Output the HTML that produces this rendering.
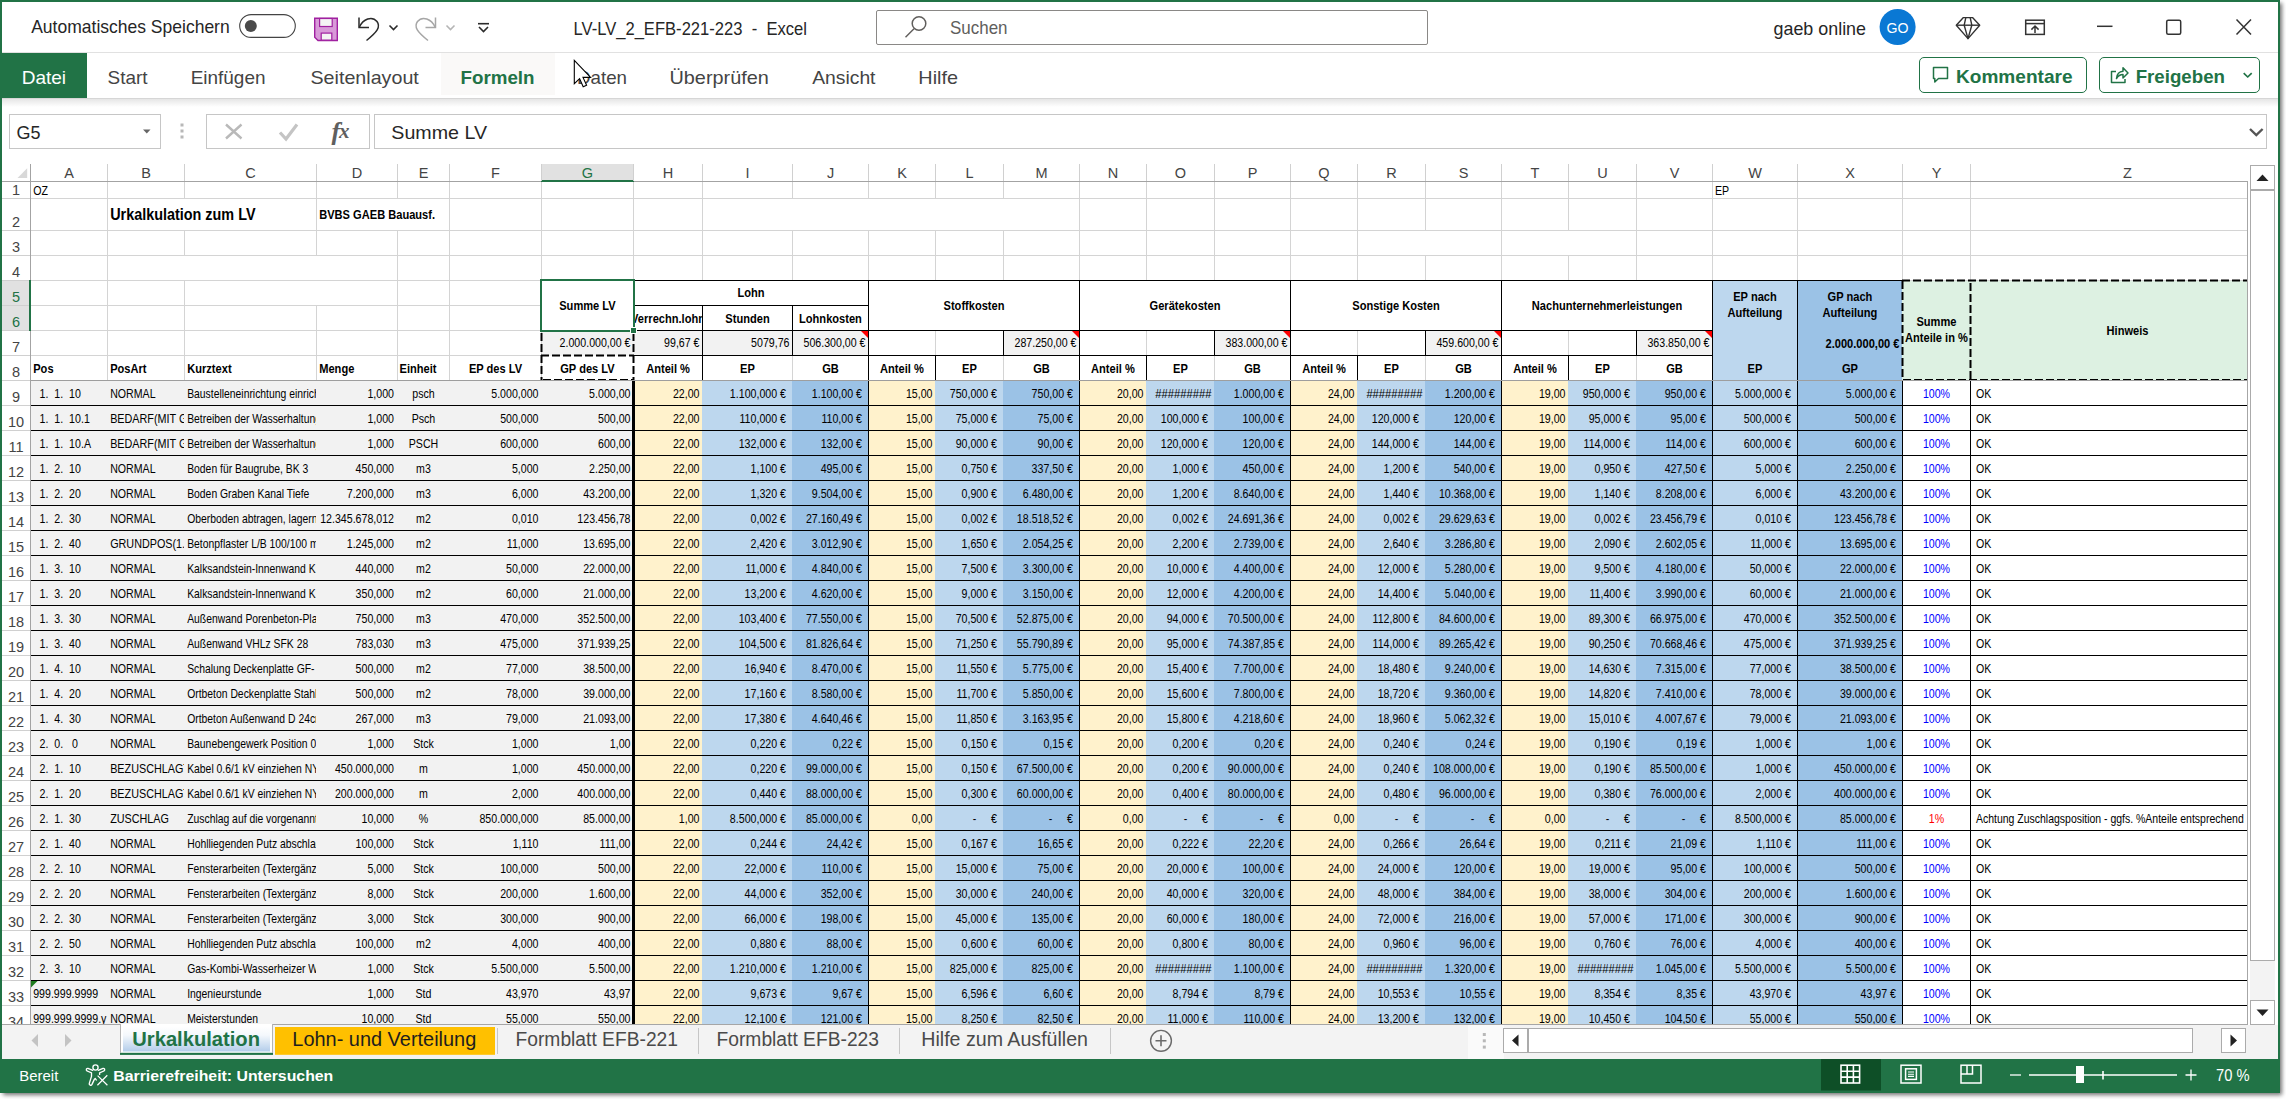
<!DOCTYPE html>
<html lang="de"><head><meta charset="utf-8"><title>LV-LV_2_EFB-221-223 - Excel</title>
<style>
html,body{margin:0;padding:0;background:#fff}
body{width:2286px;height:1099px;overflow:hidden}
svg{display:block}
text{font-family:"Liberation Sans",sans-serif;white-space:pre}
.c,.ct,.cz,.cb,.hs{font-size:12px;fill:#000}
.b{font-size:12px;font-weight:bold;fill:#000}
.bb{font-size:16px;font-weight:bold;fill:#000}
.ch{font-size:14.5px;fill:#444}
.rh{font-size:14.5px;fill:#444}
.ui{font-size:18.4px;fill:#262626}
.tab{font-size:18.4px;fill:#444}
.st{font-size:19.5px;fill:#4a4a4a}
.sb{font-size:15.5px;fill:#fff}
.e{text-anchor:end} .m{text-anchor:middle}
</style></head><body>
<svg width="2286" height="1099" viewBox="0 0 2286 1099">
<defs>
<linearGradient id="sh" x1="0" y1="0" x2="0" y2="1"><stop offset="0" stop-color="#e6e6e6"/><stop offset="1" stop-color="#ffffff"/></linearGradient>
<linearGradient id="tabg" x1="0" y1="0" x2="0" y2="1"><stop offset="0" stop-color="#ffffff"/><stop offset="0.35" stop-color="#f4f8fc"/><stop offset="1" stop-color="#b3cdea"/></linearGradient>
<filter id="ws" x="-1%" y="-1%" width="102%" height="103%"><feGaussianBlur stdDeviation="2.2"/></filter>
<clipPath id="cA"><rect x="31" y="181" width="76" height="843"/></clipPath>
<clipPath id="cB"><rect x="108" y="181" width="76" height="843"/></clipPath>
<clipPath id="cC"><rect x="185" y="355" width="131" height="669"/></clipPath>
<clipPath id="cH"><rect x="635" y="305" width="67" height="25"/></clipPath>
<clipPath id="cG"><rect x="0" y="160" width="2248" height="864"/></clipPath>
</defs>

<rect x="3" y="3" width="2279" height="1092" fill="#000" opacity=".55" filter="url(#ws)"/>
<rect x="0" y="0" width="2280" height="1093" fill="#fff"/>
<rect x="0" y="0" width="2280" height="2" fill="#217346"/>
<rect x="2" y="52" width="2276" height="1" fill="#e1e1e1"/>
<rect x="2" y="53" width="2276" height="45" fill="#fff"/>
<rect x="0" y="53" width="87" height="45" fill="#217346"/>
<rect x="441" y="53" width="114" height="42" fill="#faf9f8"/>
<rect x="2" y="98" width="2276" height="1" fill="#d6d6d6"/>
<rect x="2" y="99" width="2276" height="8" fill="url(#sh)"/>
<text class="ui" x="31.2" y="33.1" textLength="198.5" lengthAdjust="spacingAndGlyphs">Automatisches Speichern</text>
<rect x="239.7" y="14.6" width="55.6" height="22.8" rx="11.4" fill="#fff" stroke="#444" stroke-width="1.1"/>
<circle cx="250.8" cy="26" r="6" fill="#4a4a4a"/>
<g transform="translate(314,17.5)"><path d="M.7.7H23.3V23H4L.7 19.8Z" fill="#d89ad8" stroke="#a020a0" stroke-width="1.4"/><rect x="5.6" y="1" width="12.6" height="8" fill="#f4f4f4" stroke="#a020a0" stroke-width="1.2"/><rect x="7.2" y="15.6" width="10.6" height="7" fill="#f4f4f4" stroke="#a020a0" stroke-width="1.2"/></g>
<g fill="none" stroke="#2b2b2b" stroke-width="1.5" stroke-linecap="butt"><path d="M359 17.5V27.5H369"/><path d="M359.5 27C363 19 372 15.5 377 21.5C381 27 377 32 366.5 40.5"/><path d="M389.5 25.5L393.5 29.5L397.5 25.5" stroke-width="1.6"/></g>
<g fill="none" stroke="#a6a6a6" stroke-width="1.5"><path d="M435.5 17.5V27.5H425.5"/><path d="M435 27C431.5 19 422.5 15.5 417.5 21.5C413.5 27 417.5 32 428 40.5"/><path d="M446.5 25.5L450.5 29.5L454.5 25.5" stroke="#b5b5b5" stroke-width="1.6"/></g>
<g fill="none" stroke="#2b2b2b" stroke-width="1.6"><path d="M478 23.7H489"/><path d="M479 27L483.5 31.5L488 27"/></g>
<text class="ui" x="573.5" y="34.5" textLength="233.5" lengthAdjust="spacingAndGlyphs" xml:space="preserve">LV-LV_2_EFB-221-223  -  Excel</text>
<rect x="876.5" y="10.5" width="551" height="34" rx="1.5" fill="#fff" stroke="#8a8886" stroke-width="1"/>
<g fill="none" stroke="#605e5c" stroke-width="1.5"><circle cx="919" cy="23.5" r="6.8"/><path d="M914 28.8L905.5 37.3"/></g>
<text class="ui" x="950" y="34" textLength="57.5" lengthAdjust="spacingAndGlyphs" style="fill:#605e5c">Suchen</text>
<text class="ui" x="1773.5" y="34.5" textLength="92.5" lengthAdjust="spacingAndGlyphs">gaeb online</text>
<circle cx="1897.6" cy="27" r="18" fill="#0a78d4"/>
<text x="1897.6" y="32.6" text-anchor="middle" font-size="15.5" fill="#fff" textLength="22" lengthAdjust="spacingAndGlyphs">GO</text>
<g fill="none" stroke="#333" stroke-width="1.4" stroke-linejoin="round"><path d="M1963.4 17.6H1972.5L1979.7 25.2L1968 38.6L1956.3 25.2Z"/><path d="M1956.3 25.2H1979.7"/><path d="M1965.8 17.6L1964.2 25.2L1968 38.6L1971.8 25.2L1970.2 17.6"/></g>
<g fill="none" stroke="#333" stroke-width="1.5"><rect x="2025.7" y="20.2" width="18.6" height="14.2"/><path d="M2025 23.6H2045"/><path d="M2035 33V26.2M2031.4 29.6L2035 26L2038.6 29.6"/></g>
<g fill="none" stroke="#333" stroke-width="1.5"><path d="M2097 26.3H2112.5"/><rect x="2166.7" y="20.2" width="14" height="14" rx="1.5"/><path d="M2236.5 19.5L2251 34.5M2251 19.5L2236.5 34.5"/></g>
<text class="tab" x="21.7" y="83.6" textLength="44.4" lengthAdjust="spacingAndGlyphs" style="fill:#fff">Datei</text>
<text class="tab" x="107.5" y="83.6" textLength="40.0" lengthAdjust="spacingAndGlyphs">Start</text>
<text class="tab" x="190.7" y="83.6" textLength="74.8" lengthAdjust="spacingAndGlyphs">Einfügen</text>
<text class="tab" x="310.5" y="83.6" textLength="108.3" lengthAdjust="spacingAndGlyphs">Seitenlayout</text>
<text class="tab" x="460.5" y="83.6" textLength="74.0" lengthAdjust="spacingAndGlyphs" style="fill:#217346;font-weight:bold">Formeln</text>
<text class="tab" x="577" y="83.6" textLength="50.0" lengthAdjust="spacingAndGlyphs">Daten</text>
<text class="tab" x="669.5" y="83.6" textLength="99.3" lengthAdjust="spacingAndGlyphs">Überprüfen</text>
<text class="tab" x="812.2" y="83.6" textLength="63.3" lengthAdjust="spacingAndGlyphs">Ansicht</text>
<text class="tab" x="918.3" y="83.6" textLength="39.7" lengthAdjust="spacingAndGlyphs">Hilfe</text>
<rect x="1919.5" y="57.5" width="167" height="35" rx="4.5" fill="#fff" stroke="#217346" stroke-width="1"/>
<rect x="2099.5" y="57.5" width="160" height="35" rx="4.5" fill="#fff" stroke="#217346" stroke-width="1"/>
<path d="M1933.5 67.5H1947.5V78.5H1938.5L1934.8 82V78.5H1933.5Z" fill="none" stroke="#217346" stroke-width="1.5" stroke-linejoin="round"/>
<text class="tab" x="1956" y="83.3" textLength="116.5" lengthAdjust="spacingAndGlyphs" style="fill:#217346;font-weight:bold">Kommentare</text>
<g fill="none" stroke="#217346" stroke-width="1.5" stroke-linejoin="round"><path d="M2116 71.5H2111.5V82.5H2125V79"/><path d="M2116.5 78.5C2117 73.5 2119.5 71.5 2123 71.3V67.7L2128 73L2123 78V74.6C2120.5 74.6 2118.3 75.6 2116.5 78.5Z"/><path d="M2243.7 73.2L2247.7 77L2251.7 73.2" stroke-width="1.7"/></g>
<text class="tab" x="2135.7" y="83.3" textLength="89.3" lengthAdjust="spacingAndGlyphs" style="fill:#217346;font-weight:bold">Freigeben</text>
<path d="M574.3 60.3V83.7L579.6 78.7L583.2 86.7L586.6 85.2L583 77.4H590.6Z" fill="#fff" stroke="#000" stroke-width="1.1" stroke-linejoin="miter"/>
<rect x="9.5" y="114.5" width="151" height="34" fill="#fff" stroke="#c6c6c6"/>
<text class="ui" x="16.5" y="138.8" textLength="24.0" lengthAdjust="spacingAndGlyphs">G5</text>
<path d="M143 129.5H150.5L146.75 133.6Z" fill="#666"/>
<g fill="#b8b8b8"><rect x="180.5" y="123.5" width="3" height="3"/><rect x="180.5" y="129.5" width="3" height="3"/><rect x="180.5" y="135.5" width="3" height="3"/></g>
<rect x="206.5" y="114.5" width="163" height="34" fill="#fff" stroke="#c6c6c6"/>
<g fill="none" stroke="#b9b9b9" stroke-width="2.4"><path d="M226 124.5L241.5 138.5M241.5 124.5L226 138.5"/></g>
<path d="M280 132.5L286 139L297 124.5" fill="none" stroke="#c4c4c4" stroke-width="3.2"/>
<text x="331.5" y="139.6" font-style="italic" font-weight="bold" fill="#5f5f5f" style="font-family:'Liberation Serif',serif"><tspan font-size="26">f</tspan><tspan font-size="21" dx="-1.2" dy="-1.6">x</tspan></text>
<rect x="374.5" y="114.5" width="1892" height="34" fill="#fff" stroke="#c6c6c6"/>
<text class="ui" x="391.3" y="138.8" textLength="95.7" lengthAdjust="spacingAndGlyphs">Summe LV</text>
<path d="M2250 129L2256.3 135L2262.6 129" fill="none" stroke="#555" stroke-width="2.4"/>
<g clip-path="url(#cG)">
<rect x="30" y="381" width="603" height="643" fill="#f2f2f2"/>
<rect x="633" y="381" width="69" height="643" fill="#fff2cc"/>
<rect x="702" y="381" width="90" height="643" fill="#bdd7ee"/>
<rect x="792" y="381" width="76" height="643" fill="#9bc2e6"/>
<rect x="868" y="381" width="67" height="643" fill="#fff2cc"/>
<rect x="935" y="381" width="68" height="643" fill="#bdd7ee"/>
<rect x="1003" y="381" width="76" height="643" fill="#9bc2e6"/>
<rect x="1079" y="381" width="67" height="643" fill="#fff2cc"/>
<rect x="1146" y="381" width="68" height="643" fill="#bdd7ee"/>
<rect x="1214" y="381" width="76" height="643" fill="#9bc2e6"/>
<rect x="1290" y="381" width="67" height="643" fill="#fff2cc"/>
<rect x="1357" y="381" width="68" height="643" fill="#bdd7ee"/>
<rect x="1425" y="381" width="76" height="643" fill="#9bc2e6"/>
<rect x="1501" y="381" width="67" height="643" fill="#fff2cc"/>
<rect x="1568" y="381" width="68" height="643" fill="#bdd7ee"/>
<rect x="1636" y="381" width="76" height="643" fill="#9bc2e6"/>
<rect x="1712" y="281" width="85" height="743" fill="#bdd7ee"/>
<rect x="1797" y="281" width="105" height="743" fill="#9bc2e6"/>
<rect x="1902" y="281" width="345" height="100" fill="#ddf1e2"/>
<rect x="541" y="331" width="92" height="25" fill="#f2f2f2"/>
<rect x="633" y="331" width="69" height="25" fill="#f2f2f2"/>
<rect x="702" y="331" width="90" height="25" fill="#f2f2f2"/>
<rect x="792" y="331" width="76" height="25" fill="#f2f2f2"/>
<rect x="1003" y="331" width="76" height="25" fill="#f2f2f2"/>
<rect x="1214" y="331" width="76" height="25" fill="#f2f2f2"/>
<rect x="1425" y="331" width="76" height="25" fill="#f2f2f2"/>
<rect x="1636" y="331" width="76" height="25" fill="#f2f2f2"/>
<rect x="31" y="198" width="2216" height="1" fill="#d4d4d4"/>
<rect x="31" y="230" width="2216" height="1" fill="#d4d4d4"/>
<rect x="31" y="255" width="2216" height="1" fill="#d4d4d4"/>
<rect x="31" y="280" width="2216" height="1" fill="#d4d4d4"/>
<rect x="31" y="305" width="510" height="1" fill="#d4d4d4"/>
<rect x="31" y="330" width="510" height="1" fill="#d4d4d4"/>
<rect x="31" y="355" width="510" height="1" fill="#d4d4d4"/>
<rect x="31" y="380" width="510" height="1" fill="#d4d4d4"/>
<rect x="634" y="280" width="1613" height="1" fill="#d4d4d4"/>
<rect x="107" y="182" width="1" height="16" fill="#d4d4d4"/>
<rect x="184" y="182" width="1" height="16" fill="#d4d4d4"/>
<rect x="316" y="182" width="1" height="16" fill="#d4d4d4"/>
<rect x="397" y="182" width="1" height="16" fill="#d4d4d4"/>
<rect x="449" y="182" width="1" height="16" fill="#d4d4d4"/>
<rect x="541" y="182" width="1" height="16" fill="#d4d4d4"/>
<rect x="107" y="199" width="1" height="31" fill="#d4d4d4"/>
<rect x="316" y="199" width="1" height="31" fill="#d4d4d4"/>
<rect x="449" y="199" width="1" height="31" fill="#d4d4d4"/>
<rect x="541" y="199" width="1" height="31" fill="#d4d4d4"/>
<rect x="107" y="231" width="1" height="24" fill="#d4d4d4"/>
<rect x="184" y="231" width="1" height="24" fill="#d4d4d4"/>
<rect x="316" y="231" width="1" height="24" fill="#d4d4d4"/>
<rect x="397" y="231" width="1" height="24" fill="#d4d4d4"/>
<rect x="449" y="231" width="1" height="24" fill="#d4d4d4"/>
<rect x="541" y="231" width="1" height="24" fill="#d4d4d4"/>
<rect x="107" y="256" width="1" height="24" fill="#d4d4d4"/>
<rect x="397" y="256" width="1" height="24" fill="#d4d4d4"/>
<rect x="449" y="256" width="1" height="24" fill="#d4d4d4"/>
<rect x="541" y="256" width="1" height="24" fill="#d4d4d4"/>
<rect x="107" y="281" width="1" height="24" fill="#d4d4d4"/>
<rect x="184" y="281" width="1" height="24" fill="#d4d4d4"/>
<rect x="397" y="281" width="1" height="24" fill="#d4d4d4"/>
<rect x="449" y="281" width="1" height="24" fill="#d4d4d4"/>
<rect x="541" y="281" width="1" height="24" fill="#d4d4d4"/>
<rect x="107" y="306" width="1" height="24" fill="#d4d4d4"/>
<rect x="184" y="306" width="1" height="24" fill="#d4d4d4"/>
<rect x="316" y="306" width="1" height="24" fill="#d4d4d4"/>
<rect x="397" y="306" width="1" height="24" fill="#d4d4d4"/>
<rect x="449" y="306" width="1" height="24" fill="#d4d4d4"/>
<rect x="541" y="306" width="1" height="24" fill="#d4d4d4"/>
<rect x="107" y="331" width="1" height="24" fill="#d4d4d4"/>
<rect x="184" y="331" width="1" height="24" fill="#d4d4d4"/>
<rect x="316" y="331" width="1" height="24" fill="#d4d4d4"/>
<rect x="397" y="331" width="1" height="24" fill="#d4d4d4"/>
<rect x="449" y="331" width="1" height="24" fill="#d4d4d4"/>
<rect x="541" y="331" width="1" height="24" fill="#d4d4d4"/>
<rect x="107" y="356" width="1" height="24" fill="#d4d4d4"/>
<rect x="184" y="356" width="1" height="24" fill="#d4d4d4"/>
<rect x="316" y="356" width="1" height="24" fill="#d4d4d4"/>
<rect x="397" y="356" width="1" height="24" fill="#d4d4d4"/>
<rect x="449" y="356" width="1" height="24" fill="#d4d4d4"/>
<rect x="541" y="356" width="1" height="24" fill="#d4d4d4"/>
<rect x="633" y="182" width="1" height="16" fill="#d4d4d4"/>
<rect x="702" y="182" width="1" height="16" fill="#d4d4d4"/>
<rect x="792" y="182" width="1" height="16" fill="#d4d4d4"/>
<rect x="868" y="182" width="1" height="16" fill="#d4d4d4"/>
<rect x="935" y="182" width="1" height="16" fill="#d4d4d4"/>
<rect x="1003" y="182" width="1" height="16" fill="#d4d4d4"/>
<rect x="1079" y="182" width="1" height="16" fill="#d4d4d4"/>
<rect x="1146" y="182" width="1" height="16" fill="#d4d4d4"/>
<rect x="1214" y="182" width="1" height="16" fill="#d4d4d4"/>
<rect x="1290" y="182" width="1" height="16" fill="#d4d4d4"/>
<rect x="1357" y="182" width="1" height="16" fill="#d4d4d4"/>
<rect x="1425" y="182" width="1" height="16" fill="#d4d4d4"/>
<rect x="1501" y="182" width="1" height="16" fill="#d4d4d4"/>
<rect x="1568" y="182" width="1" height="16" fill="#d4d4d4"/>
<rect x="1636" y="182" width="1" height="16" fill="#d4d4d4"/>
<rect x="1712" y="182" width="1" height="16" fill="#d4d4d4"/>
<rect x="1797" y="182" width="1" height="16" fill="#d4d4d4"/>
<rect x="1902" y="182" width="1" height="16" fill="#d4d4d4"/>
<rect x="1970" y="182" width="1" height="16" fill="#d4d4d4"/>
<rect x="633" y="199" width="1" height="31" fill="#d4d4d4"/>
<rect x="702" y="199" width="1" height="31" fill="#d4d4d4"/>
<rect x="1079" y="199" width="1" height="31" fill="#d4d4d4"/>
<rect x="1146" y="199" width="1" height="31" fill="#d4d4d4"/>
<rect x="1214" y="199" width="1" height="31" fill="#d4d4d4"/>
<rect x="1290" y="199" width="1" height="31" fill="#d4d4d4"/>
<rect x="1357" y="199" width="1" height="31" fill="#d4d4d4"/>
<rect x="1425" y="199" width="1" height="31" fill="#d4d4d4"/>
<rect x="1501" y="199" width="1" height="31" fill="#d4d4d4"/>
<rect x="1568" y="199" width="1" height="31" fill="#d4d4d4"/>
<rect x="1636" y="199" width="1" height="31" fill="#d4d4d4"/>
<rect x="1712" y="199" width="1" height="31" fill="#d4d4d4"/>
<rect x="1797" y="199" width="1" height="31" fill="#d4d4d4"/>
<rect x="1902" y="199" width="1" height="31" fill="#d4d4d4"/>
<rect x="1970" y="199" width="1" height="31" fill="#d4d4d4"/>
<rect x="633" y="231" width="1" height="24" fill="#d4d4d4"/>
<rect x="702" y="231" width="1" height="24" fill="#d4d4d4"/>
<rect x="792" y="231" width="1" height="24" fill="#d4d4d4"/>
<rect x="868" y="231" width="1" height="24" fill="#d4d4d4"/>
<rect x="935" y="231" width="1" height="24" fill="#d4d4d4"/>
<rect x="1003" y="231" width="1" height="24" fill="#d4d4d4"/>
<rect x="1079" y="231" width="1" height="24" fill="#d4d4d4"/>
<rect x="1146" y="231" width="1" height="24" fill="#d4d4d4"/>
<rect x="1214" y="231" width="1" height="24" fill="#d4d4d4"/>
<rect x="1290" y="231" width="1" height="24" fill="#d4d4d4"/>
<rect x="1357" y="231" width="1" height="24" fill="#d4d4d4"/>
<rect x="1501" y="231" width="1" height="24" fill="#d4d4d4"/>
<rect x="1636" y="231" width="1" height="24" fill="#d4d4d4"/>
<rect x="1712" y="231" width="1" height="24" fill="#d4d4d4"/>
<rect x="1797" y="231" width="1" height="24" fill="#d4d4d4"/>
<rect x="1902" y="231" width="1" height="24" fill="#d4d4d4"/>
<rect x="1970" y="231" width="1" height="24" fill="#d4d4d4"/>
<rect x="633" y="256" width="1" height="24" fill="#d4d4d4"/>
<rect x="702" y="256" width="1" height="24" fill="#d4d4d4"/>
<rect x="792" y="256" width="1" height="24" fill="#d4d4d4"/>
<rect x="868" y="256" width="1" height="24" fill="#d4d4d4"/>
<rect x="935" y="256" width="1" height="24" fill="#d4d4d4"/>
<rect x="1003" y="256" width="1" height="24" fill="#d4d4d4"/>
<rect x="1079" y="256" width="1" height="24" fill="#d4d4d4"/>
<rect x="1146" y="256" width="1" height="24" fill="#d4d4d4"/>
<rect x="1214" y="256" width="1" height="24" fill="#d4d4d4"/>
<rect x="1290" y="256" width="1" height="24" fill="#d4d4d4"/>
<rect x="1357" y="256" width="1" height="24" fill="#d4d4d4"/>
<rect x="1425" y="256" width="1" height="24" fill="#d4d4d4"/>
<rect x="1501" y="256" width="1" height="24" fill="#d4d4d4"/>
<rect x="1568" y="256" width="1" height="24" fill="#d4d4d4"/>
<rect x="1636" y="256" width="1" height="24" fill="#d4d4d4"/>
<rect x="1712" y="256" width="1" height="24" fill="#d4d4d4"/>
<rect x="1797" y="256" width="1" height="24" fill="#d4d4d4"/>
<rect x="1902" y="256" width="1" height="24" fill="#d4d4d4"/>
<rect x="1970" y="256" width="1" height="24" fill="#d4d4d4"/>
<rect x="935" y="331" width="1" height="24" fill="#d4d4d4"/>
<rect x="1146" y="331" width="1" height="24" fill="#d4d4d4"/>
<rect x="1357" y="331" width="1" height="24" fill="#d4d4d4"/>
<rect x="1568" y="331" width="1" height="24" fill="#d4d4d4"/>
<rect x="792" y="356" width="1" height="24" fill="#d4d4d4"/>
<rect x="1003" y="356" width="1" height="24" fill="#d4d4d4"/>
<rect x="1214" y="356" width="1" height="24" fill="#d4d4d4"/>
<rect x="1425" y="356" width="1" height="24" fill="#d4d4d4"/>
<rect x="1636" y="356" width="1" height="24" fill="#d4d4d4"/>
<rect x="2" y="160" width="2246" height="21" fill="#fff"/>
<rect x="542" y="164" width="91" height="16" fill="#e1e1e1"/>
<rect x="541" y="180" width="93" height="2" fill="#217346"/>
<rect x="107" y="164" width="1" height="17" fill="#d0d0d0"/>
<rect x="184" y="164" width="1" height="17" fill="#d0d0d0"/>
<rect x="316" y="164" width="1" height="17" fill="#d0d0d0"/>
<rect x="397" y="164" width="1" height="17" fill="#d0d0d0"/>
<rect x="449" y="164" width="1" height="17" fill="#d0d0d0"/>
<rect x="541" y="164" width="1" height="17" fill="#d0d0d0"/>
<rect x="633" y="164" width="1" height="17" fill="#d0d0d0"/>
<rect x="702" y="164" width="1" height="17" fill="#d0d0d0"/>
<rect x="792" y="164" width="1" height="17" fill="#d0d0d0"/>
<rect x="868" y="164" width="1" height="17" fill="#d0d0d0"/>
<rect x="935" y="164" width="1" height="17" fill="#d0d0d0"/>
<rect x="1003" y="164" width="1" height="17" fill="#d0d0d0"/>
<rect x="1079" y="164" width="1" height="17" fill="#d0d0d0"/>
<rect x="1146" y="164" width="1" height="17" fill="#d0d0d0"/>
<rect x="1214" y="164" width="1" height="17" fill="#d0d0d0"/>
<rect x="1290" y="164" width="1" height="17" fill="#d0d0d0"/>
<rect x="1357" y="164" width="1" height="17" fill="#d0d0d0"/>
<rect x="1425" y="164" width="1" height="17" fill="#d0d0d0"/>
<rect x="1501" y="164" width="1" height="17" fill="#d0d0d0"/>
<rect x="1568" y="164" width="1" height="17" fill="#d0d0d0"/>
<rect x="1636" y="164" width="1" height="17" fill="#d0d0d0"/>
<rect x="1712" y="164" width="1" height="17" fill="#d0d0d0"/>
<rect x="1797" y="164" width="1" height="17" fill="#d0d0d0"/>
<rect x="1902" y="164" width="1" height="17" fill="#d0d0d0"/>
<rect x="1970" y="164" width="1" height="17" fill="#d0d0d0"/>
<rect x="2" y="181" width="539" height="1" fill="#a3a3a3"/>
<rect x="634" y="181" width="1614" height="1" fill="#a3a3a3"/>
<path d="M17.5 178H27.2V168.3Z" fill="#d8d8d8"/>
<rect x="2" y="182" width="28" height="842" fill="#fff"/>
<rect x="2" y="281" width="28" height="50" fill="#e1e1e1"/>
<rect x="2" y="198" width="28" height="1" fill="#d0d0d0"/>
<rect x="2" y="230" width="28" height="1" fill="#d0d0d0"/>
<rect x="2" y="255" width="28" height="1" fill="#d0d0d0"/>
<rect x="2" y="280" width="28" height="1" fill="#d0d0d0"/>
<rect x="2" y="305" width="28" height="1" fill="#d0d0d0"/>
<rect x="2" y="330" width="28" height="1" fill="#d0d0d0"/>
<rect x="2" y="355" width="28" height="1" fill="#d0d0d0"/>
<rect x="2" y="380" width="28" height="1" fill="#d0d0d0"/>
<rect x="2" y="405" width="28" height="1" fill="#d0d0d0"/>
<rect x="2" y="430" width="28" height="1" fill="#d0d0d0"/>
<rect x="2" y="455" width="28" height="1" fill="#d0d0d0"/>
<rect x="2" y="480" width="28" height="1" fill="#d0d0d0"/>
<rect x="2" y="505" width="28" height="1" fill="#d0d0d0"/>
<rect x="2" y="530" width="28" height="1" fill="#d0d0d0"/>
<rect x="2" y="555" width="28" height="1" fill="#d0d0d0"/>
<rect x="2" y="580" width="28" height="1" fill="#d0d0d0"/>
<rect x="2" y="605" width="28" height="1" fill="#d0d0d0"/>
<rect x="2" y="630" width="28" height="1" fill="#d0d0d0"/>
<rect x="2" y="655" width="28" height="1" fill="#d0d0d0"/>
<rect x="2" y="680" width="28" height="1" fill="#d0d0d0"/>
<rect x="2" y="705" width="28" height="1" fill="#d0d0d0"/>
<rect x="2" y="730" width="28" height="1" fill="#d0d0d0"/>
<rect x="2" y="755" width="28" height="1" fill="#d0d0d0"/>
<rect x="2" y="780" width="28" height="1" fill="#d0d0d0"/>
<rect x="2" y="805" width="28" height="1" fill="#d0d0d0"/>
<rect x="2" y="830" width="28" height="1" fill="#d0d0d0"/>
<rect x="2" y="855" width="28" height="1" fill="#d0d0d0"/>
<rect x="2" y="880" width="28" height="1" fill="#d0d0d0"/>
<rect x="2" y="905" width="28" height="1" fill="#d0d0d0"/>
<rect x="2" y="930" width="28" height="1" fill="#d0d0d0"/>
<rect x="2" y="955" width="28" height="1" fill="#d0d0d0"/>
<rect x="2" y="980" width="28" height="1" fill="#d0d0d0"/>
<rect x="2" y="1005" width="28" height="1" fill="#d0d0d0"/>
<rect x="30" y="164" width="1" height="860" fill="#a3a3a3"/>
<rect x="29" y="280" width="2" height="51" fill="#217346"/>
<rect x="634" y="280" width="1269" height="1" fill="#000"/>
<rect x="634" y="305" width="235" height="1" fill="#000"/>
<rect x="634" y="330" width="1079" height="1" fill="#000"/>
<rect x="634" y="355" width="1079" height="1" fill="#000"/>
<rect x="31" y="405" width="2217" height="1" fill="#000"/>
<rect x="31" y="430" width="2217" height="1" fill="#000"/>
<rect x="31" y="455" width="2217" height="1" fill="#000"/>
<rect x="31" y="480" width="2217" height="1" fill="#000"/>
<rect x="31" y="505" width="2217" height="1" fill="#000"/>
<rect x="31" y="530" width="2217" height="1" fill="#000"/>
<rect x="31" y="555" width="2217" height="1" fill="#000"/>
<rect x="31" y="580" width="2217" height="1" fill="#000"/>
<rect x="31" y="605" width="2217" height="1" fill="#000"/>
<rect x="31" y="630" width="2217" height="1" fill="#000"/>
<rect x="31" y="655" width="2217" height="1" fill="#000"/>
<rect x="31" y="680" width="2217" height="1" fill="#000"/>
<rect x="31" y="705" width="2217" height="1" fill="#000"/>
<rect x="31" y="730" width="2217" height="1" fill="#000"/>
<rect x="31" y="755" width="2217" height="1" fill="#000"/>
<rect x="31" y="780" width="2217" height="1" fill="#000"/>
<rect x="31" y="805" width="2217" height="1" fill="#000"/>
<rect x="31" y="830" width="2217" height="1" fill="#000"/>
<rect x="31" y="855" width="2217" height="1" fill="#000"/>
<rect x="31" y="880" width="2217" height="1" fill="#000"/>
<rect x="31" y="905" width="2217" height="1" fill="#000"/>
<rect x="31" y="930" width="2217" height="1" fill="#000"/>
<rect x="31" y="955" width="2217" height="1" fill="#000"/>
<rect x="31" y="980" width="2217" height="1" fill="#000"/>
<rect x="31" y="1005" width="2217" height="1" fill="#000"/>
<rect x="702" y="305" width="1" height="75" fill="#000"/>
<rect x="792" y="305" width="1" height="50" fill="#000"/>
<rect x="868" y="280" width="1" height="744" fill="#000"/>
<rect x="935" y="355" width="1" height="25" fill="#000"/>
<rect x="1003" y="330" width="1" height="25" fill="#000"/>
<rect x="1079" y="280" width="1" height="744" fill="#000"/>
<rect x="1146" y="355" width="1" height="25" fill="#000"/>
<rect x="1214" y="330" width="1" height="25" fill="#000"/>
<rect x="1290" y="280" width="1" height="744" fill="#000"/>
<rect x="1357" y="355" width="1" height="25" fill="#000"/>
<rect x="1425" y="330" width="1" height="25" fill="#000"/>
<rect x="1501" y="280" width="1" height="744" fill="#000"/>
<rect x="1568" y="355" width="1" height="25" fill="#000"/>
<rect x="1636" y="330" width="1" height="25" fill="#000"/>
<rect x="1712" y="280" width="1" height="744" fill="#000"/>
<rect x="1797" y="280" width="1" height="744" fill="#000"/>
<rect x="1902" y="380" width="1" height="644" fill="#000"/>
<rect x="1970" y="380" width="1" height="644" fill="#000"/>
<rect x="632" y="381" width="3" height="643" fill="#000"/>
<rect x="31" y="380" width="2217" height="1" fill="#9e9e9e"/>
<rect x="2247" y="181" width="1" height="843" fill="#a6a6a6"/>
<g fill="none" stroke="#000" stroke-width="2" stroke-dasharray="8 3"><path d="M1902 280.5H2247"/><path d="M1902.5 281V379"/><path d="M1970.5 283V379"/><path d="M541.5 333V380"/><path d="M633.5 333V380"/><path d="M541 355.5H634"/></g>
<path d="M1903 379.5H2247M543 379.5H634" fill="none" stroke="#000" stroke-width="1.2" stroke-dasharray="8 3"/>
<path d="M861 331H868V338Z" fill="#ff0000"/>
<path d="M1072 331H1079V338Z" fill="#ff0000"/>
<path d="M1283 331H1290V338Z" fill="#ff0000"/>
<path d="M1494 331H1501V338Z" fill="#ff0000"/>
<path d="M1705 331H1712V338Z" fill="#ff0000"/>
<path d="M31 981H37.5L31 987.5Z" fill="#1e7b1e"/>
<rect x="541" y="280" width="93" height="51" fill="none" stroke="#217346" stroke-width="2"/>
<rect x="630.5" y="327.5" width="6" height="6" fill="#217346" stroke="#fff" stroke-width="1"/>
</g>
<g class="ch m" xml:space="preserve">
<text x="69.0" y="178.0">A</text>
<text x="146.0" y="178.0">B</text>
<text x="250.5" y="178.0">C</text>
<text x="357.0" y="178.0">D</text>
<text x="423.5" y="178.0">E</text>
<text x="495.5" y="178.0">F</text>
<text x="587.5" y="178.0" fill="#217346" style="fill:#217346">G</text>
<text x="668.0" y="178.0">H</text>
<text x="747.5" y="178.0">I</text>
<text x="830.5" y="178.0">J</text>
<text x="902.0" y="178.0">K</text>
<text x="969.5" y="178.0">L</text>
<text x="1041.5" y="178.0">M</text>
<text x="1113.0" y="178.0">N</text>
<text x="1180.5" y="178.0">O</text>
<text x="1252.5" y="178.0">P</text>
<text x="1324.0" y="178.0">Q</text>
<text x="1391.5" y="178.0">R</text>
<text x="1463.5" y="178.0">S</text>
<text x="1535.0" y="178.0">T</text>
<text x="1602.5" y="178.0">U</text>
<text x="1674.5" y="178.0">V</text>
<text x="1755.0" y="178.0">W</text>
<text x="1850.0" y="178.0">X</text>
<text x="1936.5" y="178.0">Y</text>
<text x="2127.5" y="178.0">Z</text>
</g>
<g class="rh m" xml:space="preserve">
<text x="16.0" y="194.7">1</text>
<text x="16.0" y="226.7">2</text>
<text x="16.0" y="251.7">3</text>
<text x="16.0" y="276.7">4</text>
<text x="16.0" y="301.7" fill="#217346" style="fill:#217346">5</text>
<text x="16.0" y="326.7" fill="#217346" style="fill:#217346">6</text>
<text x="16.0" y="351.7">7</text>
<text x="16.0" y="376.7">8</text>
<text x="16.0" y="401.7">9</text>
<text x="16.0" y="426.7">10</text>
<text x="16.0" y="451.7">11</text>
<text x="16.0" y="476.7">12</text>
<text x="16.0" y="501.7">13</text>
<text x="16.0" y="526.7">14</text>
<text x="16.0" y="551.7">15</text>
<text x="16.0" y="576.7">16</text>
<text x="16.0" y="601.7">17</text>
<text x="16.0" y="626.7">18</text>
<text x="16.0" y="651.7">19</text>
<text x="16.0" y="676.7">20</text>
<text x="16.0" y="701.7">21</text>
<text x="16.0" y="726.7">22</text>
<text x="16.0" y="751.7">23</text>
<text x="16.0" y="776.7">24</text>
<text x="16.0" y="801.7">25</text>
<text x="16.0" y="826.7">26</text>
<text x="16.0" y="851.7">27</text>
<text x="16.0" y="876.7">28</text>
<text x="16.0" y="901.7">29</text>
<text x="16.0" y="926.7">30</text>
<text x="16.0" y="951.7">31</text>
<text x="16.0" y="976.7">32</text>
<text x="16.0" y="1001.7">33</text>
<text x="16.0" y="1026.7">34</text>
</g>
<g class="c" transform="scale(0.885 1)" xml:space="preserve">
<text x="37.5" y="194.8">OZ</text>
<text x="1937.9" y="194.8">EP</text>
<text x="2232.8" y="398.0">OK</text>
<text x="2232.8" y="423.0">OK</text>
<text x="2232.8" y="448.0">OK</text>
<text x="2232.8" y="473.0">OK</text>
<text x="2232.8" y="498.0">OK</text>
<text x="2232.8" y="523.0">OK</text>
<text x="2232.8" y="548.0">OK</text>
<text x="2232.8" y="573.0">OK</text>
<text x="2232.8" y="598.0">OK</text>
<text x="2232.8" y="623.0">OK</text>
<text x="2232.8" y="648.0">OK</text>
<text x="2232.8" y="673.0">OK</text>
<text x="2232.8" y="698.0">OK</text>
<text x="2232.8" y="723.0">OK</text>
<text x="2232.8" y="748.0">OK</text>
<text x="2232.8" y="773.0">OK</text>
<text x="2232.8" y="798.0">OK</text>
<text x="2232.8" y="848.0">OK</text>
<text x="2232.8" y="873.0">OK</text>
<text x="2232.8" y="898.0">OK</text>
<text x="2232.8" y="923.0">OK</text>
<text x="2232.8" y="948.0">OK</text>
<text x="2232.8" y="973.0">OK</text>
<text x="2232.8" y="998.0">OK</text>
<text x="2232.8" y="1023.0">OK</text>
</g>
<g class="bb" transform="scale(0.9 1)" xml:space="preserve">
<text x="122.4" y="219.7">Urkalkulation zum LV</text>
</g>
<g class="b" transform="scale(0.925 1)" xml:space="preserve">
<text x="345.1" y="219.3">BVBS GAEB Bauausf.</text>
<text x="35.9" y="373.0">Pos</text>
<text x="119.1" y="373.0">PosArt</text>
<text x="202.4" y="373.0">Kurztext</text>
<text x="345.1" y="373.0">Menge</text>
<text x="431.9" y="373.0">Einheit</text>
</g>
<g class="b m" transform="scale(0.925 1)" xml:space="preserve">
<text x="635.1" y="310.0">Summe LV</text>
<text x="811.9" y="297.0">Lohn</text>
<text x="808.1" y="322.7">Stunden</text>
<text x="897.8" y="322.7">Lohnkosten</text>
<text x="1053.0" y="310.0">Stoffkosten</text>
<text x="1281.1" y="310.0">Gerätekosten</text>
<text x="1509.2" y="310.0">Sonstige Kosten</text>
<text x="1737.3" y="310.0">Nachunternehmerleistungen</text>
<text x="1897.3" y="301.0">EP nach</text>
<text x="1897.3" y="317.0">Aufteilung</text>
<text x="1897.3" y="373.0">EP</text>
<text x="2000.0" y="301.0">GP nach</text>
<text x="2000.0" y="317.0">Aufteilung</text>
<text x="2000.0" y="373.0">GP</text>
<text x="2093.5" y="326.0">Summe</text>
<text x="2093.5" y="342.0">Anteile in %</text>
<text x="2300.0" y="335.0">Hinweis</text>
<text x="535.7" y="373.0">EP des LV</text>
<text x="635.1" y="373.0">GP des LV</text>
<text x="722.2" y="373.0">Anteil %</text>
<text x="808.1" y="373.0">EP</text>
<text x="897.8" y="373.0">GB</text>
<text x="975.1" y="373.0">Anteil %</text>
<text x="1048.1" y="373.0">EP</text>
<text x="1125.9" y="373.0">GB</text>
<text x="1203.2" y="373.0">Anteil %</text>
<text x="1276.2" y="373.0">EP</text>
<text x="1354.1" y="373.0">GB</text>
<text x="1431.4" y="373.0">Anteil %</text>
<text x="1504.3" y="373.0">EP</text>
<text x="1582.2" y="373.0">GB</text>
<text x="1659.5" y="373.0">Anteil %</text>
<text x="1732.4" y="373.0">EP</text>
<text x="1810.3" y="373.0">GB</text>
</g>
<g clip-path="url(#cH)">
<g class="b m" transform="scale(0.925 1)" xml:space="preserve">
<text x="722.2" y="322.7">Verrechn.lohn</text>
</g>
</g>
<g class="b e" transform="scale(0.925 1)" xml:space="preserve">
<text x="2053.5" y="348.0">2.000.000,00 €</text>
</g>
<g class="c e" transform="scale(0.885 1)" xml:space="preserve">
<text x="712.4" y="346.7">2.000.000,00 €</text>
<text x="790.4" y="346.7">99,67 €</text>
<text x="892.1" y="346.7">5079,76</text>
<text x="978.0" y="346.7">506.300,00 €</text>
<text x="1216.4" y="346.7">287.250,00 €</text>
<text x="1454.8" y="346.7">383.000,00 €</text>
<text x="1693.2" y="346.7">459.600,00 €</text>
<text x="1931.6" y="346.7">363.850,00 €</text>
<text x="445.2" y="398.0">1,000</text>
<text x="608.5" y="398.0">5.000,000</text>
<text x="712.4" y="398.0">5.000,00</text>
<text x="790.4" y="398.0">22,00</text>
<text x="888.1" y="398.0">1.100,000 €</text>
<text x="974.0" y="398.0">1.100,00 €</text>
<text x="1053.7" y="398.0">15,00</text>
<text x="1126.6" y="398.0">750,000 €</text>
<text x="1212.4" y="398.0">750,00 €</text>
<text x="1292.1" y="398.0">20,00</text>
<text x="1450.8" y="398.0">1.000,00 €</text>
<text x="1530.5" y="398.0">24,00</text>
<text x="1689.3" y="398.0">1.200,00 €</text>
<text x="1768.9" y="398.0">19,00</text>
<text x="1841.8" y="398.0">950,000 €</text>
<text x="1927.7" y="398.0">950,00 €</text>
<text x="2023.7" y="398.0">5.000,000 €</text>
<text x="2142.4" y="398.0">5.000,00 €</text>
<text x="445.2" y="423.0">1,000</text>
<text x="608.5" y="423.0">500,000</text>
<text x="712.4" y="423.0">500,00</text>
<text x="790.4" y="423.0">22,00</text>
<text x="888.1" y="423.0">110,000 €</text>
<text x="974.0" y="423.0">110,00 €</text>
<text x="1053.7" y="423.0">15,00</text>
<text x="1126.6" y="423.0">75,000 €</text>
<text x="1212.4" y="423.0">75,00 €</text>
<text x="1292.1" y="423.0">20,00</text>
<text x="1365.0" y="423.0">100,000 €</text>
<text x="1450.8" y="423.0">100,00 €</text>
<text x="1530.5" y="423.0">24,00</text>
<text x="1603.4" y="423.0">120,000 €</text>
<text x="1689.3" y="423.0">120,00 €</text>
<text x="1768.9" y="423.0">19,00</text>
<text x="1841.8" y="423.0">95,000 €</text>
<text x="1927.7" y="423.0">95,00 €</text>
<text x="2023.7" y="423.0">500,000 €</text>
<text x="2142.4" y="423.0">500,00 €</text>
<text x="445.2" y="448.0">1,000</text>
<text x="608.5" y="448.0">600,000</text>
<text x="712.4" y="448.0">600,00</text>
<text x="790.4" y="448.0">22,00</text>
<text x="888.1" y="448.0">132,000 €</text>
<text x="974.0" y="448.0">132,00 €</text>
<text x="1053.7" y="448.0">15,00</text>
<text x="1126.6" y="448.0">90,000 €</text>
<text x="1212.4" y="448.0">90,00 €</text>
<text x="1292.1" y="448.0">20,00</text>
<text x="1365.0" y="448.0">120,000 €</text>
<text x="1450.8" y="448.0">120,00 €</text>
<text x="1530.5" y="448.0">24,00</text>
<text x="1603.4" y="448.0">144,000 €</text>
<text x="1689.3" y="448.0">144,00 €</text>
<text x="1768.9" y="448.0">19,00</text>
<text x="1841.8" y="448.0">114,000 €</text>
<text x="1927.7" y="448.0">114,00 €</text>
<text x="2023.7" y="448.0">600,000 €</text>
<text x="2142.4" y="448.0">600,00 €</text>
<text x="445.2" y="473.0">450,000</text>
<text x="608.5" y="473.0">5,000</text>
<text x="712.4" y="473.0">2.250,00</text>
<text x="790.4" y="473.0">22,00</text>
<text x="888.1" y="473.0">1,100 €</text>
<text x="974.0" y="473.0">495,00 €</text>
<text x="1053.7" y="473.0">15,00</text>
<text x="1126.6" y="473.0">0,750 €</text>
<text x="1212.4" y="473.0">337,50 €</text>
<text x="1292.1" y="473.0">20,00</text>
<text x="1365.0" y="473.0">1,000 €</text>
<text x="1450.8" y="473.0">450,00 €</text>
<text x="1530.5" y="473.0">24,00</text>
<text x="1603.4" y="473.0">1,200 €</text>
<text x="1689.3" y="473.0">540,00 €</text>
<text x="1768.9" y="473.0">19,00</text>
<text x="1841.8" y="473.0">0,950 €</text>
<text x="1927.7" y="473.0">427,50 €</text>
<text x="2023.7" y="473.0">5,000 €</text>
<text x="2142.4" y="473.0">2.250,00 €</text>
<text x="445.2" y="498.0">7.200,000</text>
<text x="608.5" y="498.0">6,000</text>
<text x="712.4" y="498.0">43.200,00</text>
<text x="790.4" y="498.0">22,00</text>
<text x="888.1" y="498.0">1,320 €</text>
<text x="974.0" y="498.0">9.504,00 €</text>
<text x="1053.7" y="498.0">15,00</text>
<text x="1126.6" y="498.0">0,900 €</text>
<text x="1212.4" y="498.0">6.480,00 €</text>
<text x="1292.1" y="498.0">20,00</text>
<text x="1365.0" y="498.0">1,200 €</text>
<text x="1450.8" y="498.0">8.640,00 €</text>
<text x="1530.5" y="498.0">24,00</text>
<text x="1603.4" y="498.0">1,440 €</text>
<text x="1689.3" y="498.0">10.368,00 €</text>
<text x="1768.9" y="498.0">19,00</text>
<text x="1841.8" y="498.0">1,140 €</text>
<text x="1927.7" y="498.0">8.208,00 €</text>
<text x="2023.7" y="498.0">6,000 €</text>
<text x="2142.4" y="498.0">43.200,00 €</text>
<text x="445.2" y="523.0">12.345.678,012</text>
<text x="608.5" y="523.0">0,010</text>
<text x="712.4" y="523.0">123.456,78</text>
<text x="790.4" y="523.0">22,00</text>
<text x="888.1" y="523.0">0,002 €</text>
<text x="974.0" y="523.0">27.160,49 €</text>
<text x="1053.7" y="523.0">15,00</text>
<text x="1126.6" y="523.0">0,002 €</text>
<text x="1212.4" y="523.0">18.518,52 €</text>
<text x="1292.1" y="523.0">20,00</text>
<text x="1365.0" y="523.0">0,002 €</text>
<text x="1450.8" y="523.0">24.691,36 €</text>
<text x="1530.5" y="523.0">24,00</text>
<text x="1603.4" y="523.0">0,002 €</text>
<text x="1689.3" y="523.0">29.629,63 €</text>
<text x="1768.9" y="523.0">19,00</text>
<text x="1841.8" y="523.0">0,002 €</text>
<text x="1927.7" y="523.0">23.456,79 €</text>
<text x="2023.7" y="523.0">0,010 €</text>
<text x="2142.4" y="523.0">123.456,78 €</text>
<text x="445.2" y="548.0">1.245,000</text>
<text x="608.5" y="548.0">11,000</text>
<text x="712.4" y="548.0">13.695,00</text>
<text x="790.4" y="548.0">22,00</text>
<text x="888.1" y="548.0">2,420 €</text>
<text x="974.0" y="548.0">3.012,90 €</text>
<text x="1053.7" y="548.0">15,00</text>
<text x="1126.6" y="548.0">1,650 €</text>
<text x="1212.4" y="548.0">2.054,25 €</text>
<text x="1292.1" y="548.0">20,00</text>
<text x="1365.0" y="548.0">2,200 €</text>
<text x="1450.8" y="548.0">2.739,00 €</text>
<text x="1530.5" y="548.0">24,00</text>
<text x="1603.4" y="548.0">2,640 €</text>
<text x="1689.3" y="548.0">3.286,80 €</text>
<text x="1768.9" y="548.0">19,00</text>
<text x="1841.8" y="548.0">2,090 €</text>
<text x="1927.7" y="548.0">2.602,05 €</text>
<text x="2023.7" y="548.0">11,000 €</text>
<text x="2142.4" y="548.0">13.695,00 €</text>
<text x="445.2" y="573.0">440,000</text>
<text x="608.5" y="573.0">50,000</text>
<text x="712.4" y="573.0">22.000,00</text>
<text x="790.4" y="573.0">22,00</text>
<text x="888.1" y="573.0">11,000 €</text>
<text x="974.0" y="573.0">4.840,00 €</text>
<text x="1053.7" y="573.0">15,00</text>
<text x="1126.6" y="573.0">7,500 €</text>
<text x="1212.4" y="573.0">3.300,00 €</text>
<text x="1292.1" y="573.0">20,00</text>
<text x="1365.0" y="573.0">10,000 €</text>
<text x="1450.8" y="573.0">4.400,00 €</text>
<text x="1530.5" y="573.0">24,00</text>
<text x="1603.4" y="573.0">12,000 €</text>
<text x="1689.3" y="573.0">5.280,00 €</text>
<text x="1768.9" y="573.0">19,00</text>
<text x="1841.8" y="573.0">9,500 €</text>
<text x="1927.7" y="573.0">4.180,00 €</text>
<text x="2023.7" y="573.0">50,000 €</text>
<text x="2142.4" y="573.0">22.000,00 €</text>
<text x="445.2" y="598.0">350,000</text>
<text x="608.5" y="598.0">60,000</text>
<text x="712.4" y="598.0">21.000,00</text>
<text x="790.4" y="598.0">22,00</text>
<text x="888.1" y="598.0">13,200 €</text>
<text x="974.0" y="598.0">4.620,00 €</text>
<text x="1053.7" y="598.0">15,00</text>
<text x="1126.6" y="598.0">9,000 €</text>
<text x="1212.4" y="598.0">3.150,00 €</text>
<text x="1292.1" y="598.0">20,00</text>
<text x="1365.0" y="598.0">12,000 €</text>
<text x="1450.8" y="598.0">4.200,00 €</text>
<text x="1530.5" y="598.0">24,00</text>
<text x="1603.4" y="598.0">14,400 €</text>
<text x="1689.3" y="598.0">5.040,00 €</text>
<text x="1768.9" y="598.0">19,00</text>
<text x="1841.8" y="598.0">11,400 €</text>
<text x="1927.7" y="598.0">3.990,00 €</text>
<text x="2023.7" y="598.0">60,000 €</text>
<text x="2142.4" y="598.0">21.000,00 €</text>
<text x="445.2" y="623.0">750,000</text>
<text x="608.5" y="623.0">470,000</text>
<text x="712.4" y="623.0">352.500,00</text>
<text x="790.4" y="623.0">22,00</text>
<text x="888.1" y="623.0">103,400 €</text>
<text x="974.0" y="623.0">77.550,00 €</text>
<text x="1053.7" y="623.0">15,00</text>
<text x="1126.6" y="623.0">70,500 €</text>
<text x="1212.4" y="623.0">52.875,00 €</text>
<text x="1292.1" y="623.0">20,00</text>
<text x="1365.0" y="623.0">94,000 €</text>
<text x="1450.8" y="623.0">70.500,00 €</text>
<text x="1530.5" y="623.0">24,00</text>
<text x="1603.4" y="623.0">112,800 €</text>
<text x="1689.3" y="623.0">84.600,00 €</text>
<text x="1768.9" y="623.0">19,00</text>
<text x="1841.8" y="623.0">89,300 €</text>
<text x="1927.7" y="623.0">66.975,00 €</text>
<text x="2023.7" y="623.0">470,000 €</text>
<text x="2142.4" y="623.0">352.500,00 €</text>
<text x="445.2" y="648.0">783,030</text>
<text x="608.5" y="648.0">475,000</text>
<text x="712.4" y="648.0">371.939,25</text>
<text x="790.4" y="648.0">22,00</text>
<text x="888.1" y="648.0">104,500 €</text>
<text x="974.0" y="648.0">81.826,64 €</text>
<text x="1053.7" y="648.0">15,00</text>
<text x="1126.6" y="648.0">71,250 €</text>
<text x="1212.4" y="648.0">55.790,89 €</text>
<text x="1292.1" y="648.0">20,00</text>
<text x="1365.0" y="648.0">95,000 €</text>
<text x="1450.8" y="648.0">74.387,85 €</text>
<text x="1530.5" y="648.0">24,00</text>
<text x="1603.4" y="648.0">114,000 €</text>
<text x="1689.3" y="648.0">89.265,42 €</text>
<text x="1768.9" y="648.0">19,00</text>
<text x="1841.8" y="648.0">90,250 €</text>
<text x="1927.7" y="648.0">70.668,46 €</text>
<text x="2023.7" y="648.0">475,000 €</text>
<text x="2142.4" y="648.0">371.939,25 €</text>
<text x="445.2" y="673.0">500,000</text>
<text x="608.5" y="673.0">77,000</text>
<text x="712.4" y="673.0">38.500,00</text>
<text x="790.4" y="673.0">22,00</text>
<text x="888.1" y="673.0">16,940 €</text>
<text x="974.0" y="673.0">8.470,00 €</text>
<text x="1053.7" y="673.0">15,00</text>
<text x="1126.6" y="673.0">11,550 €</text>
<text x="1212.4" y="673.0">5.775,00 €</text>
<text x="1292.1" y="673.0">20,00</text>
<text x="1365.0" y="673.0">15,400 €</text>
<text x="1450.8" y="673.0">7.700,00 €</text>
<text x="1530.5" y="673.0">24,00</text>
<text x="1603.4" y="673.0">18,480 €</text>
<text x="1689.3" y="673.0">9.240,00 €</text>
<text x="1768.9" y="673.0">19,00</text>
<text x="1841.8" y="673.0">14,630 €</text>
<text x="1927.7" y="673.0">7.315,00 €</text>
<text x="2023.7" y="673.0">77,000 €</text>
<text x="2142.4" y="673.0">38.500,00 €</text>
<text x="445.2" y="698.0">500,000</text>
<text x="608.5" y="698.0">78,000</text>
<text x="712.4" y="698.0">39.000,00</text>
<text x="790.4" y="698.0">22,00</text>
<text x="888.1" y="698.0">17,160 €</text>
<text x="974.0" y="698.0">8.580,00 €</text>
<text x="1053.7" y="698.0">15,00</text>
<text x="1126.6" y="698.0">11,700 €</text>
<text x="1212.4" y="698.0">5.850,00 €</text>
<text x="1292.1" y="698.0">20,00</text>
<text x="1365.0" y="698.0">15,600 €</text>
<text x="1450.8" y="698.0">7.800,00 €</text>
<text x="1530.5" y="698.0">24,00</text>
<text x="1603.4" y="698.0">18,720 €</text>
<text x="1689.3" y="698.0">9.360,00 €</text>
<text x="1768.9" y="698.0">19,00</text>
<text x="1841.8" y="698.0">14,820 €</text>
<text x="1927.7" y="698.0">7.410,00 €</text>
<text x="2023.7" y="698.0">78,000 €</text>
<text x="2142.4" y="698.0">39.000,00 €</text>
<text x="445.2" y="723.0">267,000</text>
<text x="608.5" y="723.0">79,000</text>
<text x="712.4" y="723.0">21.093,00</text>
<text x="790.4" y="723.0">22,00</text>
<text x="888.1" y="723.0">17,380 €</text>
<text x="974.0" y="723.0">4.640,46 €</text>
<text x="1053.7" y="723.0">15,00</text>
<text x="1126.6" y="723.0">11,850 €</text>
<text x="1212.4" y="723.0">3.163,95 €</text>
<text x="1292.1" y="723.0">20,00</text>
<text x="1365.0" y="723.0">15,800 €</text>
<text x="1450.8" y="723.0">4.218,60 €</text>
<text x="1530.5" y="723.0">24,00</text>
<text x="1603.4" y="723.0">18,960 €</text>
<text x="1689.3" y="723.0">5.062,32 €</text>
<text x="1768.9" y="723.0">19,00</text>
<text x="1841.8" y="723.0">15,010 €</text>
<text x="1927.7" y="723.0">4.007,67 €</text>
<text x="2023.7" y="723.0">79,000 €</text>
<text x="2142.4" y="723.0">21.093,00 €</text>
<text x="445.2" y="748.0">1,000</text>
<text x="608.5" y="748.0">1,000</text>
<text x="712.4" y="748.0">1,00</text>
<text x="790.4" y="748.0">22,00</text>
<text x="888.1" y="748.0">0,220 €</text>
<text x="974.0" y="748.0">0,22 €</text>
<text x="1053.7" y="748.0">15,00</text>
<text x="1126.6" y="748.0">0,150 €</text>
<text x="1212.4" y="748.0">0,15 €</text>
<text x="1292.1" y="748.0">20,00</text>
<text x="1365.0" y="748.0">0,200 €</text>
<text x="1450.8" y="748.0">0,20 €</text>
<text x="1530.5" y="748.0">24,00</text>
<text x="1603.4" y="748.0">0,240 €</text>
<text x="1689.3" y="748.0">0,24 €</text>
<text x="1768.9" y="748.0">19,00</text>
<text x="1841.8" y="748.0">0,190 €</text>
<text x="1927.7" y="748.0">0,19 €</text>
<text x="2023.7" y="748.0">1,000 €</text>
<text x="2142.4" y="748.0">1,00 €</text>
<text x="445.2" y="773.0">450.000,000</text>
<text x="608.5" y="773.0">1,000</text>
<text x="712.4" y="773.0">450.000,00</text>
<text x="790.4" y="773.0">22,00</text>
<text x="888.1" y="773.0">0,220 €</text>
<text x="974.0" y="773.0">99.000,00 €</text>
<text x="1053.7" y="773.0">15,00</text>
<text x="1126.6" y="773.0">0,150 €</text>
<text x="1212.4" y="773.0">67.500,00 €</text>
<text x="1292.1" y="773.0">20,00</text>
<text x="1365.0" y="773.0">0,200 €</text>
<text x="1450.8" y="773.0">90.000,00 €</text>
<text x="1530.5" y="773.0">24,00</text>
<text x="1603.4" y="773.0">0,240 €</text>
<text x="1689.3" y="773.0">108.000,00 €</text>
<text x="1768.9" y="773.0">19,00</text>
<text x="1841.8" y="773.0">0,190 €</text>
<text x="1927.7" y="773.0">85.500,00 €</text>
<text x="2023.7" y="773.0">1,000 €</text>
<text x="2142.4" y="773.0">450.000,00 €</text>
<text x="445.2" y="798.0">200.000,000</text>
<text x="608.5" y="798.0">2,000</text>
<text x="712.4" y="798.0">400.000,00</text>
<text x="790.4" y="798.0">22,00</text>
<text x="888.1" y="798.0">0,440 €</text>
<text x="974.0" y="798.0">88.000,00 €</text>
<text x="1053.7" y="798.0">15,00</text>
<text x="1126.6" y="798.0">0,300 €</text>
<text x="1212.4" y="798.0">60.000,00 €</text>
<text x="1292.1" y="798.0">20,00</text>
<text x="1365.0" y="798.0">0,400 €</text>
<text x="1450.8" y="798.0">80.000,00 €</text>
<text x="1530.5" y="798.0">24,00</text>
<text x="1603.4" y="798.0">0,480 €</text>
<text x="1689.3" y="798.0">96.000,00 €</text>
<text x="1768.9" y="798.0">19,00</text>
<text x="1841.8" y="798.0">0,380 €</text>
<text x="1927.7" y="798.0">76.000,00 €</text>
<text x="2023.7" y="798.0">2,000 €</text>
<text x="2142.4" y="798.0">400.000,00 €</text>
<text x="445.2" y="823.0">10,000</text>
<text x="608.5" y="823.0">850.000,000</text>
<text x="712.4" y="823.0">85.000,00</text>
<text x="790.4" y="823.0">1,00</text>
<text x="888.1" y="823.0">8.500,000 €</text>
<text x="974.0" y="823.0">85.000,00 €</text>
<text x="1053.7" y="823.0">0,00</text>
<text x="1126.6" y="823.0">-     €</text>
<text x="1212.4" y="823.0">-     €</text>
<text x="1292.1" y="823.0">0,00</text>
<text x="1365.0" y="823.0">-     €</text>
<text x="1450.8" y="823.0">-     €</text>
<text x="1530.5" y="823.0">0,00</text>
<text x="1603.4" y="823.0">-     €</text>
<text x="1689.3" y="823.0">-     €</text>
<text x="1768.9" y="823.0">0,00</text>
<text x="1841.8" y="823.0">-     €</text>
<text x="1927.7" y="823.0">-     €</text>
<text x="2023.7" y="823.0">8.500,000 €</text>
<text x="2142.4" y="823.0">85.000,00 €</text>
<text x="445.2" y="848.0">100,000</text>
<text x="608.5" y="848.0">1,110</text>
<text x="712.4" y="848.0">111,00</text>
<text x="790.4" y="848.0">22,00</text>
<text x="888.1" y="848.0">0,244 €</text>
<text x="974.0" y="848.0">24,42 €</text>
<text x="1053.7" y="848.0">15,00</text>
<text x="1126.6" y="848.0">0,167 €</text>
<text x="1212.4" y="848.0">16,65 €</text>
<text x="1292.1" y="848.0">20,00</text>
<text x="1365.0" y="848.0">0,222 €</text>
<text x="1450.8" y="848.0">22,20 €</text>
<text x="1530.5" y="848.0">24,00</text>
<text x="1603.4" y="848.0">0,266 €</text>
<text x="1689.3" y="848.0">26,64 €</text>
<text x="1768.9" y="848.0">19,00</text>
<text x="1841.8" y="848.0">0,211 €</text>
<text x="1927.7" y="848.0">21,09 €</text>
<text x="2023.7" y="848.0">1,110 €</text>
<text x="2142.4" y="848.0">111,00 €</text>
<text x="445.2" y="873.0">5,000</text>
<text x="608.5" y="873.0">100,000</text>
<text x="712.4" y="873.0">500,00</text>
<text x="790.4" y="873.0">22,00</text>
<text x="888.1" y="873.0">22,000 €</text>
<text x="974.0" y="873.0">110,00 €</text>
<text x="1053.7" y="873.0">15,00</text>
<text x="1126.6" y="873.0">15,000 €</text>
<text x="1212.4" y="873.0">75,00 €</text>
<text x="1292.1" y="873.0">20,00</text>
<text x="1365.0" y="873.0">20,000 €</text>
<text x="1450.8" y="873.0">100,00 €</text>
<text x="1530.5" y="873.0">24,00</text>
<text x="1603.4" y="873.0">24,000 €</text>
<text x="1689.3" y="873.0">120,00 €</text>
<text x="1768.9" y="873.0">19,00</text>
<text x="1841.8" y="873.0">19,000 €</text>
<text x="1927.7" y="873.0">95,00 €</text>
<text x="2023.7" y="873.0">100,000 €</text>
<text x="2142.4" y="873.0">500,00 €</text>
<text x="445.2" y="898.0">8,000</text>
<text x="608.5" y="898.0">200,000</text>
<text x="712.4" y="898.0">1.600,00</text>
<text x="790.4" y="898.0">22,00</text>
<text x="888.1" y="898.0">44,000 €</text>
<text x="974.0" y="898.0">352,00 €</text>
<text x="1053.7" y="898.0">15,00</text>
<text x="1126.6" y="898.0">30,000 €</text>
<text x="1212.4" y="898.0">240,00 €</text>
<text x="1292.1" y="898.0">20,00</text>
<text x="1365.0" y="898.0">40,000 €</text>
<text x="1450.8" y="898.0">320,00 €</text>
<text x="1530.5" y="898.0">24,00</text>
<text x="1603.4" y="898.0">48,000 €</text>
<text x="1689.3" y="898.0">384,00 €</text>
<text x="1768.9" y="898.0">19,00</text>
<text x="1841.8" y="898.0">38,000 €</text>
<text x="1927.7" y="898.0">304,00 €</text>
<text x="2023.7" y="898.0">200,000 €</text>
<text x="2142.4" y="898.0">1.600,00 €</text>
<text x="445.2" y="923.0">3,000</text>
<text x="608.5" y="923.0">300,000</text>
<text x="712.4" y="923.0">900,00</text>
<text x="790.4" y="923.0">22,00</text>
<text x="888.1" y="923.0">66,000 €</text>
<text x="974.0" y="923.0">198,00 €</text>
<text x="1053.7" y="923.0">15,00</text>
<text x="1126.6" y="923.0">45,000 €</text>
<text x="1212.4" y="923.0">135,00 €</text>
<text x="1292.1" y="923.0">20,00</text>
<text x="1365.0" y="923.0">60,000 €</text>
<text x="1450.8" y="923.0">180,00 €</text>
<text x="1530.5" y="923.0">24,00</text>
<text x="1603.4" y="923.0">72,000 €</text>
<text x="1689.3" y="923.0">216,00 €</text>
<text x="1768.9" y="923.0">19,00</text>
<text x="1841.8" y="923.0">57,000 €</text>
<text x="1927.7" y="923.0">171,00 €</text>
<text x="2023.7" y="923.0">300,000 €</text>
<text x="2142.4" y="923.0">900,00 €</text>
<text x="445.2" y="948.0">100,000</text>
<text x="608.5" y="948.0">4,000</text>
<text x="712.4" y="948.0">400,00</text>
<text x="790.4" y="948.0">22,00</text>
<text x="888.1" y="948.0">0,880 €</text>
<text x="974.0" y="948.0">88,00 €</text>
<text x="1053.7" y="948.0">15,00</text>
<text x="1126.6" y="948.0">0,600 €</text>
<text x="1212.4" y="948.0">60,00 €</text>
<text x="1292.1" y="948.0">20,00</text>
<text x="1365.0" y="948.0">0,800 €</text>
<text x="1450.8" y="948.0">80,00 €</text>
<text x="1530.5" y="948.0">24,00</text>
<text x="1603.4" y="948.0">0,960 €</text>
<text x="1689.3" y="948.0">96,00 €</text>
<text x="1768.9" y="948.0">19,00</text>
<text x="1841.8" y="948.0">0,760 €</text>
<text x="1927.7" y="948.0">76,00 €</text>
<text x="2023.7" y="948.0">4,000 €</text>
<text x="2142.4" y="948.0">400,00 €</text>
<text x="445.2" y="973.0">1,000</text>
<text x="608.5" y="973.0">5.500,000</text>
<text x="712.4" y="973.0">5.500,00</text>
<text x="790.4" y="973.0">22,00</text>
<text x="888.1" y="973.0">1.210,000 €</text>
<text x="974.0" y="973.0">1.210,00 €</text>
<text x="1053.7" y="973.0">15,00</text>
<text x="1126.6" y="973.0">825,000 €</text>
<text x="1212.4" y="973.0">825,00 €</text>
<text x="1292.1" y="973.0">20,00</text>
<text x="1450.8" y="973.0">1.100,00 €</text>
<text x="1530.5" y="973.0">24,00</text>
<text x="1689.3" y="973.0">1.320,00 €</text>
<text x="1768.9" y="973.0">19,00</text>
<text x="1927.7" y="973.0">1.045,00 €</text>
<text x="2023.7" y="973.0">5.500,000 €</text>
<text x="2142.4" y="973.0">5.500,00 €</text>
<text x="445.2" y="998.0">1,000</text>
<text x="608.5" y="998.0">43,970</text>
<text x="712.4" y="998.0">43,97</text>
<text x="790.4" y="998.0">22,00</text>
<text x="888.1" y="998.0">9,673 €</text>
<text x="974.0" y="998.0">9,67 €</text>
<text x="1053.7" y="998.0">15,00</text>
<text x="1126.6" y="998.0">6,596 €</text>
<text x="1212.4" y="998.0">6,60 €</text>
<text x="1292.1" y="998.0">20,00</text>
<text x="1365.0" y="998.0">8,794 €</text>
<text x="1450.8" y="998.0">8,79 €</text>
<text x="1530.5" y="998.0">24,00</text>
<text x="1603.4" y="998.0">10,553 €</text>
<text x="1689.3" y="998.0">10,55 €</text>
<text x="1768.9" y="998.0">19,00</text>
<text x="1841.8" y="998.0">8,354 €</text>
<text x="1927.7" y="998.0">8,35 €</text>
<text x="2023.7" y="998.0">43,970 €</text>
<text x="2142.4" y="998.0">43,97 €</text>
<text x="445.2" y="1023.0">10,000</text>
<text x="608.5" y="1023.0">55,000</text>
<text x="712.4" y="1023.0">550,00</text>
<text x="790.4" y="1023.0">22,00</text>
<text x="888.1" y="1023.0">12,100 €</text>
<text x="974.0" y="1023.0">121,00 €</text>
<text x="1053.7" y="1023.0">15,00</text>
<text x="1126.6" y="1023.0">8,250 €</text>
<text x="1212.4" y="1023.0">82,50 €</text>
<text x="1292.1" y="1023.0">20,00</text>
<text x="1365.0" y="1023.0">11,000 €</text>
<text x="1450.8" y="1023.0">110,00 €</text>
<text x="1530.5" y="1023.0">24,00</text>
<text x="1603.4" y="1023.0">13,200 €</text>
<text x="1689.3" y="1023.0">132,00 €</text>
<text x="1768.9" y="1023.0">19,00</text>
<text x="1841.8" y="1023.0">10,450 €</text>
<text x="1927.7" y="1023.0">104,50 €</text>
<text x="2023.7" y="1023.0">55,000 €</text>
<text x="2142.4" y="1023.0">550,00 €</text>
</g>
<g clip-path="url(#cA)">
<g class="c" transform="scale(0.885 1)" xml:space="preserve">
<text x="38.1" y="398.0">  1.  1.  10</text>
<text x="38.1" y="423.0">  1.  1.  10.1</text>
<text x="38.1" y="448.0">  1.  1.  10.A</text>
<text x="38.1" y="473.0">  1.  2.  10</text>
<text x="38.1" y="498.0">  1.  2.  20</text>
<text x="38.1" y="523.0">  1.  2.  30</text>
<text x="38.1" y="548.0">  1.  2.  40</text>
<text x="38.1" y="573.0">  1.  3.  10</text>
<text x="38.1" y="598.0">  1.  3.  20</text>
<text x="38.1" y="623.0">  1.  3.  30</text>
<text x="38.1" y="648.0">  1.  3.  40</text>
<text x="38.1" y="673.0">  1.  4.  10</text>
<text x="38.1" y="698.0">  1.  4.  20</text>
<text x="38.1" y="723.0">  1.  4.  30</text>
<text x="38.1" y="748.0">  2.  0.   0</text>
<text x="38.1" y="773.0">  2.  1.  10</text>
<text x="38.1" y="798.0">  2.  1.  20</text>
<text x="38.1" y="823.0">  2.  1.  30</text>
<text x="38.1" y="848.0">  2.  1.  40</text>
<text x="38.1" y="873.0">  2.  2.  10</text>
<text x="38.1" y="898.0">  2.  2.  20</text>
<text x="38.1" y="923.0">  2.  2.  30</text>
<text x="38.1" y="948.0">  2.  2.  50</text>
<text x="38.1" y="973.0">  2.  3.  10</text>
<text x="37.5" y="998.0">999.999.9999</text>
<text x="37.5" y="1023.0">999.999.9999.y</text>
</g>
</g>
<g clip-path="url(#cB)">
<g class="c" transform="scale(0.885 1)" xml:space="preserve">
<text x="124.5" y="398.0">NORMAL</text>
<text x="124.5" y="473.0">NORMAL</text>
<text x="124.5" y="498.0">NORMAL</text>
<text x="124.5" y="523.0">NORMAL</text>
<text x="124.5" y="573.0">NORMAL</text>
<text x="124.5" y="598.0">NORMAL</text>
<text x="124.5" y="623.0">NORMAL</text>
<text x="124.5" y="648.0">NORMAL</text>
<text x="124.5" y="673.0">NORMAL</text>
<text x="124.5" y="698.0">NORMAL</text>
<text x="124.5" y="723.0">NORMAL</text>
<text x="124.5" y="748.0">NORMAL</text>
<text x="124.5" y="848.0">NORMAL</text>
<text x="124.5" y="873.0">NORMAL</text>
<text x="124.5" y="898.0">NORMAL</text>
<text x="124.5" y="923.0">NORMAL</text>
<text x="124.5" y="948.0">NORMAL</text>
<text x="124.5" y="973.0">NORMAL</text>
<text x="124.5" y="998.0">NORMAL</text>
<text x="124.5" y="1023.0">NORMAL</text>
</g>
</g>
<g clip-path="url(#cC)">
<g class="ct" transform="scale(0.865 1)" xml:space="preserve">
<text x="216.4" y="398.0">Baustelleneinrichtung einrichten</text>
<text x="216.4" y="423.0">Betreiben der Wasserhaltung</text>
<text x="216.4" y="448.0">Betreiben der Wasserhaltung</text>
<text x="216.4" y="473.0">Boden für Baugrube, BK 3</text>
<text x="216.4" y="498.0">Boden Graben Kanal Tiefe</text>
<text x="216.4" y="523.0">Oberboden abtragen, lagern</text>
<text x="216.4" y="548.0">Betonpflaster L/B 100/100 mm</text>
<text x="216.4" y="573.0">Kalksandstein-Innenwand KS</text>
<text x="216.4" y="598.0">Kalksandstein-Innenwand KS</text>
<text x="216.4" y="623.0">Außenwand Porenbeton-Plan</text>
<text x="216.4" y="648.0">Außenwand VHLz SFK 28</text>
<text x="216.4" y="673.0">Schalung Deckenplatte GF-</text>
<text x="216.4" y="698.0">Ortbeton Deckenplatte Stahlb</text>
<text x="216.4" y="723.0">Ortbeton Außenwand D 24cm</text>
<text x="216.4" y="748.0">Baunebengewerk Position 0</text>
<text x="216.4" y="773.0">Kabel 0.6/1 kV einziehen NYM</text>
<text x="216.4" y="798.0">Kabel 0.6/1 kV einziehen NYM</text>
<text x="216.4" y="823.0">Zuschlag auf die vorgenannten</text>
<text x="216.4" y="848.0">Hohlliegenden Putz abschlagen</text>
<text x="216.4" y="873.0">Fensterarbeiten (Textergänzung</text>
<text x="216.4" y="898.0">Fensterarbeiten (Textergänzung</text>
<text x="216.4" y="923.0">Fensterarbeiten (Textergänzung</text>
<text x="216.4" y="948.0">Hohlliegenden Putz abschlagen</text>
<text x="216.4" y="973.0">Gas-Kombi-Wasserheizer WH</text>
<text x="216.4" y="998.0">Ingenieurstunde</text>
<text x="216.4" y="1023.0">Meisterstunden</text>
</g>
</g>
<g class="c m" transform="scale(0.885 1)" xml:space="preserve">
<text x="478.5" y="398.0">psch</text>
<text x="2188.1" y="398.0" fill="#0000ff" style="fill:#0000ff">100%</text>
<text x="478.5" y="423.0">Psch</text>
<text x="2188.1" y="423.0" fill="#0000ff" style="fill:#0000ff">100%</text>
<text x="478.5" y="448.0">PSCH</text>
<text x="2188.1" y="448.0" fill="#0000ff" style="fill:#0000ff">100%</text>
<text x="478.5" y="473.0">m3</text>
<text x="2188.1" y="473.0" fill="#0000ff" style="fill:#0000ff">100%</text>
<text x="478.5" y="498.0">m3</text>
<text x="2188.1" y="498.0" fill="#0000ff" style="fill:#0000ff">100%</text>
<text x="478.5" y="523.0">m2</text>
<text x="2188.1" y="523.0" fill="#0000ff" style="fill:#0000ff">100%</text>
<text x="478.5" y="548.0">m2</text>
<text x="2188.1" y="548.0" fill="#0000ff" style="fill:#0000ff">100%</text>
<text x="478.5" y="573.0">m2</text>
<text x="2188.1" y="573.0" fill="#0000ff" style="fill:#0000ff">100%</text>
<text x="478.5" y="598.0">m2</text>
<text x="2188.1" y="598.0" fill="#0000ff" style="fill:#0000ff">100%</text>
<text x="478.5" y="623.0">m3</text>
<text x="2188.1" y="623.0" fill="#0000ff" style="fill:#0000ff">100%</text>
<text x="478.5" y="648.0">m3</text>
<text x="2188.1" y="648.0" fill="#0000ff" style="fill:#0000ff">100%</text>
<text x="478.5" y="673.0">m2</text>
<text x="2188.1" y="673.0" fill="#0000ff" style="fill:#0000ff">100%</text>
<text x="478.5" y="698.0">m2</text>
<text x="2188.1" y="698.0" fill="#0000ff" style="fill:#0000ff">100%</text>
<text x="478.5" y="723.0">m3</text>
<text x="2188.1" y="723.0" fill="#0000ff" style="fill:#0000ff">100%</text>
<text x="478.5" y="748.0">Stck</text>
<text x="2188.1" y="748.0" fill="#0000ff" style="fill:#0000ff">100%</text>
<text x="478.5" y="773.0">m</text>
<text x="2188.1" y="773.0" fill="#0000ff" style="fill:#0000ff">100%</text>
<text x="478.5" y="798.0">m</text>
<text x="2188.1" y="798.0" fill="#0000ff" style="fill:#0000ff">100%</text>
<text x="478.5" y="823.0">%</text>
<text x="2188.1" y="823.0" fill="#ff0000" style="fill:#ff0000">1%</text>
<text x="478.5" y="848.0">Stck</text>
<text x="2188.1" y="848.0" fill="#0000ff" style="fill:#0000ff">100%</text>
<text x="478.5" y="873.0">Stck</text>
<text x="2188.1" y="873.0" fill="#0000ff" style="fill:#0000ff">100%</text>
<text x="478.5" y="898.0">Stck</text>
<text x="2188.1" y="898.0" fill="#0000ff" style="fill:#0000ff">100%</text>
<text x="478.5" y="923.0">Stck</text>
<text x="2188.1" y="923.0" fill="#0000ff" style="fill:#0000ff">100%</text>
<text x="478.5" y="948.0">m2</text>
<text x="2188.1" y="948.0" fill="#0000ff" style="fill:#0000ff">100%</text>
<text x="478.5" y="973.0">Stck</text>
<text x="2188.1" y="973.0" fill="#0000ff" style="fill:#0000ff">100%</text>
<text x="478.5" y="998.0">Std</text>
<text x="2188.1" y="998.0" fill="#0000ff" style="fill:#0000ff">100%</text>
<text x="478.5" y="1023.0">Std</text>
<text x="2188.1" y="1023.0" fill="#0000ff" style="fill:#0000ff">100%</text>
</g>
<g class="hs e" transform="scale(0.935 1)" xml:space="preserve">
<text x="1295.7" y="398.0">#########</text>
<text x="1521.4" y="398.0">#########</text>
<text x="1295.7" y="973.0">#########</text>
<text x="1521.4" y="973.0">#########</text>
<text x="1747.1" y="973.0">#########</text>
</g>
<g clip-path="url(#cB)">
<g class="cb" transform="scale(0.9 1)" xml:space="preserve">
<text x="122.4" y="423.0">BEDARF(MIT GB)</text>
<text x="122.4" y="448.0">BEDARF(MIT GB)</text>
<text x="122.4" y="548.0">GRUNDPOS(1.1)</text>
<text x="122.4" y="773.0">BEZUSCHLAGT</text>
<text x="122.4" y="798.0">BEZUSCHLAGT</text>
<text x="122.4" y="823.0">ZUSCHLAG</text>
</g>
</g>
<g class="cz" transform="scale(0.874 1)" xml:space="preserve">
<text x="2260.9" y="823.0">Achtung Zuschlagsposition - ggfs. %Anteile entsprechend</text>
</g>
<rect x="2248" y="160" width="30" height="864" fill="#fff"/>
<rect x="2250" y="165" width="25" height="860" fill="#f3f3f3"/>
<rect x="2250.5" y="165.5" width="24" height="24" fill="#fff" stroke="#ababab"/>
<path d="M2256.5 181H2268.5L2262.5 174.5Z" fill="#222"/>
<rect x="2250.5" y="190.5" width="24" height="770" fill="#fff" stroke="#ababab"/>
<rect x="2250.5" y="1000.5" width="24" height="24" fill="#fff" stroke="#ababab"/>
<path d="M2256.5 1009.5H2268.5L2262.5 1016Z" fill="#222"/>
<rect x="2" y="1024" width="2246" height="1" fill="#a6a6a6"/>
<rect x="2" y="1025" width="2276" height="34" fill="#f3f3f3"/>
<rect x="1468" y="1025" width="36" height="34" fill="#fafafa"/>
<path d="M38 1034V1047L31.5 1040.5Z" fill="#c3c3c3"/><path d="M65 1034V1047L71.5 1040.5Z" fill="#c3c3c3"/>
<rect x="120" y="1024" width="153" height="29" fill="#fff"/>
<rect x="123" y="1026.5" width="147" height="25" fill="url(#tabg)"/>
<rect x="120" y="1052.8" width="153" height="2.1" fill="#217346"/>
<rect x="120" y="1024" width="1" height="29" fill="#b4b4b4"/>
<rect x="272" y="1024" width="1" height="29" fill="#b4b4b4"/>
<text class="st" x="132.3" y="1045.8" textLength="127.7" lengthAdjust="spacingAndGlyphs" style="fill:#217346;font-weight:bold">Urkalkulation</text>
<rect x="275" y="1027" width="220" height="27.8" fill="#ffc000"/>
<text class="st" x="292.3" y="1045.8" textLength="184.0" lengthAdjust="spacingAndGlyphs" style="fill:#1e1e1e">Lohn- und Verteilung</text>
<rect x="497" y="1028" width="1" height="26" fill="#c6c6c6"/>
<rect x="698" y="1028" width="1" height="26" fill="#c6c6c6"/>
<rect x="899" y="1028" width="1" height="26" fill="#c6c6c6"/>
<rect x="1110" y="1028" width="1" height="26" fill="#c6c6c6"/>
<text class="st" x="515.5" y="1045.8" textLength="162.5" lengthAdjust="spacingAndGlyphs">Formblatt EFB-221</text>
<text class="st" x="716.5" y="1045.8" textLength="162.5" lengthAdjust="spacingAndGlyphs">Formblatt EFB-223</text>
<text class="st" x="921.3" y="1045.8" textLength="166.7" lengthAdjust="spacingAndGlyphs">Hilfe zum Ausfüllen</text>
<circle cx="1161" cy="1040.8" r="10.4" fill="none" stroke="#6a6a6a" stroke-width="1.4"/><path d="M1155.5 1040.8H1166.5M1161 1035.3V1046.3" stroke="#6a6a6a" stroke-width="1.6" fill="none"/>
<g fill="#b8b8b8"><rect x="1482.8" y="1033" width="3" height="3"/><rect x="1482.8" y="1039.3" width="3" height="3"/><rect x="1482.8" y="1045.6" width="3" height="3"/></g>
<rect x="1503.5" y="1028.5" width="24" height="24" fill="#fff" stroke="#ababab"/>
<path d="M1518.5 1034.5V1046.5L1512 1040.5Z" fill="#222"/>
<rect x="1528.5" y="1028.5" width="664" height="24" fill="#fff" stroke="#ababab"/>
<rect x="2221.5" y="1028.5" width="24" height="24" fill="#fff" stroke="#ababab"/>
<path d="M2230.5 1034.5V1046.5L2237 1040.5Z" fill="#222"/>
<rect x="0" y="1059" width="2280" height="34" fill="#217346"/>
<text class="sb" x="19.3" y="1081" textLength="39.0" lengthAdjust="spacingAndGlyphs">Bereit</text>
<g fill="none" stroke="#fff" stroke-width="1.35" stroke-linecap="round" stroke-linejoin="round"><circle cx="95.5" cy="1067.5" r="2.6"/><path d="M92.7 1070.3L88 1068.4C86.3 1067.9 85.6 1070.4 87.2 1071L91.5 1072.8V1076.4L89.3 1083.4C88.8 1085.2 91.2 1086 92 1084.4L94.2 1079.6L95.3 1078.5L96.3 1080"/><path d="M98.3 1070.3L103 1068.4C104.7 1067.9 105.4 1070.4 103.8 1071L99.6 1072.8V1074.4"/><path d="M97.6 1075.6L107.4 1085.2M107.3 1075.3L97.4 1085.2" stroke-width="1.25" stroke-linecap="butt"/></g>
<text class="sb" x="113.3" y="1081" textLength="220.0" lengthAdjust="spacingAndGlyphs" style="font-weight:bold">Barrierefreiheit: Untersuchen</text>
<rect x="1821" y="1059" width="60" height="31.5" fill="#0e4f27"/>
<g fill="none" stroke="#fff" stroke-width="1.6"><rect x="1841" y="1065.2" width="18.6" height="17.8"/><path d="M1841 1071.2H1859.6M1841 1077.1H1859.6M1847.2 1065.2V1083M1853.4 1065.2V1083"/></g>
<g fill="none" stroke="#fff" stroke-width="1.5"><rect x="1901" y="1065.2" width="20" height="17.8"/><rect x="1905.6" y="1068.8" width="10.8" height="10.6"/><path d="M1908 1072H1914M1908 1074.2H1914M1908 1076.4H1914" stroke-width="1.1"/></g>
<g fill="none" stroke="#fff" stroke-width="1.5"><rect x="1961" y="1065.2" width="20" height="17.8"/><path d="M1961 1074H1972.5V1065.2M1967 1065.2V1074"/></g>
<g stroke="#fff" fill="none"><path d="M2010 1075H2021" stroke-width="1.3"/><path d="M2029 1075H2177" stroke-width="1.6"/><path d="M2103 1071V1079.5" stroke-width="1.6"/><path d="M2185.5 1075H2196.5M2191 1069.5V1080.5" stroke-width="1.3"/></g>
<rect x="2076" y="1066" width="8" height="17" fill="#fff"/>
<text class="sb" x="2216" y="1081" textLength="33.5" lengthAdjust="spacingAndGlyphs" style="font-size:16px">70 %</text>
<rect x="0" y="0" width="2" height="1093" fill="#217346"/>
<rect x="2278" y="0" width="2" height="1093" fill="#217346"/>
</svg></body></html>
